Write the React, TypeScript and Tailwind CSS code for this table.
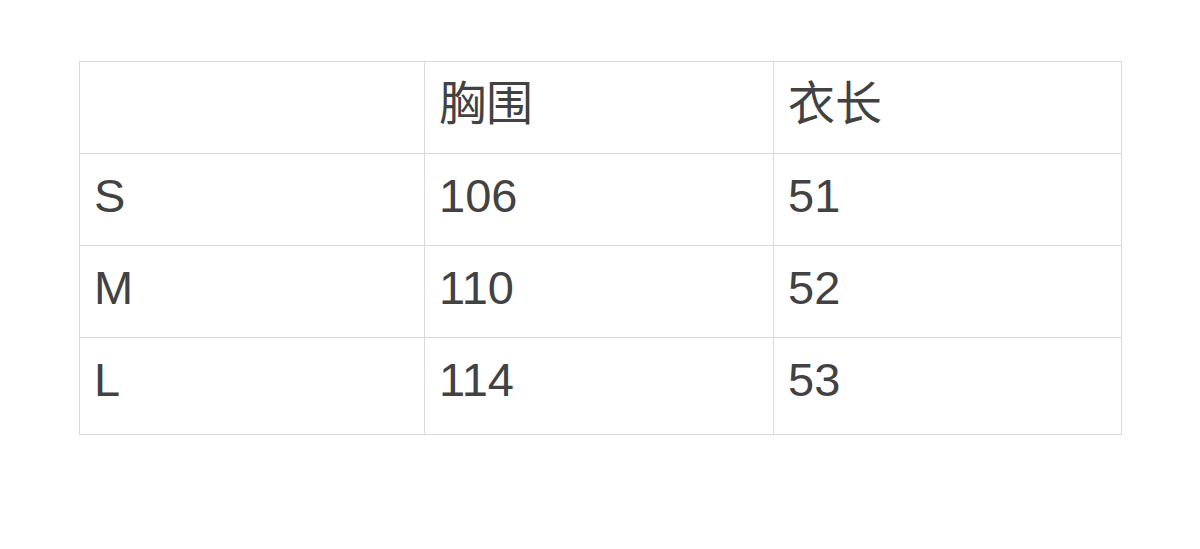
const rows = [
  ['', '胸围', '衣长'],
  ['S', '106', '51'],
  ['M', '110', '52'],
  ['L', '114', '53'],
];

const colWidths = ['w-[345px]', 'w-[349px]', 'w-[348px]'];

export default function App() {
  return (
    <div className="w-[1200px] h-[549px] bg-white pt-[61px] pl-[79px]">
      <div
        className="w-[1043px] border-l border-t border-[#dadada] text-[#424242] text-[47px] leading-[47px]"
        style={{ fontFamily: '"Liberation Sans", "Noto Sans CJK SC", sans-serif' }}
      >
        {rows.map((row, i) => (
          <div key={i} className={`flex ${i === rows.length - 1 ? 'h-[97px]' : 'h-[92px]'}`}>
            {row.map((cell, j) => (
              <div
                key={j}
                className={`${colWidths[j]} border-r border-b border-[#dadada] pl-[14px] pt-[18px]`}
              >
                {cell}
              </div>
            ))}
          </div>
        ))}
      </div>
    </div>
  );
}
